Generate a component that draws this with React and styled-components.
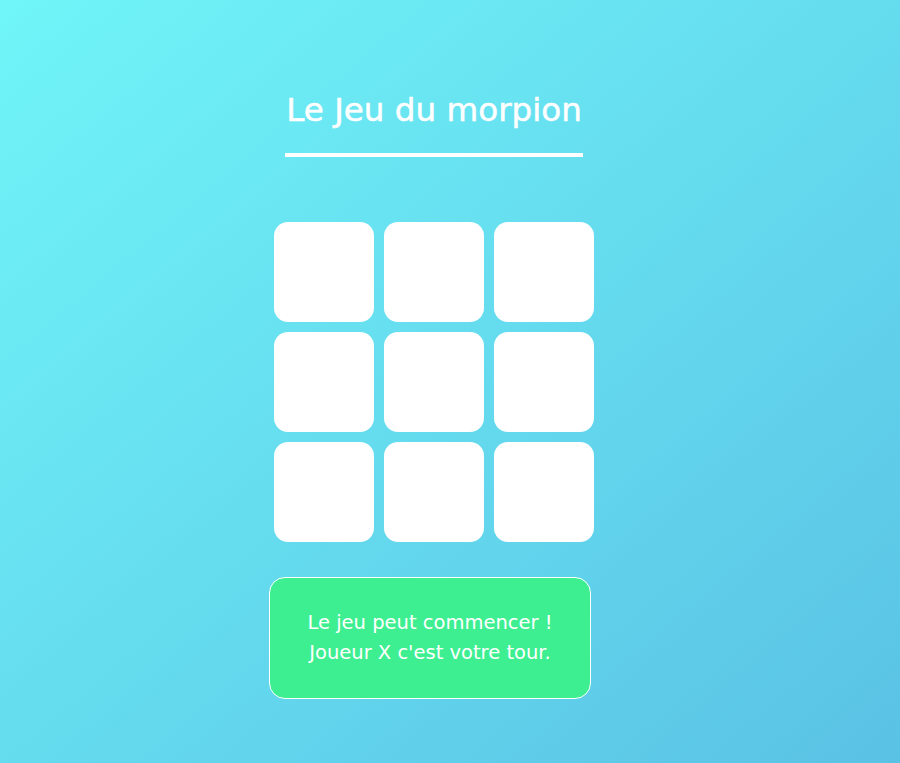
import React, { useState } from 'react';
import styled, { createGlobalStyle } from 'styled-components';

const GlobalStyle = createGlobalStyle`
  html, body {
    margin: 0;
    padding: 0;
  }
  body {
    min-height: 763px;
    font-family: 'DejaVu Sans', 'Open Sans', sans-serif;
    background: linear-gradient(to bottom right, #70f5f8, #5ac2e5);
  }
`;

const App = () => {
  const [cells] = useState(Array(9).fill(null));

  return (
    <>
      <GlobalStyle />
      <Page>
        <Board>
          <Title>Le Jeu du morpion</Title>
          <Underline />
          <Grid>
            {cells.map((value, i) => (
              <Cell key={i}>{value}</Cell>
            ))}
          </Grid>
          <Status>
            <StatusLine>Le jeu peut commencer !</StatusLine>
            <StatusLine>Joueur X c'est votre tour.</StatusLine>
          </Status>
        </Board>
      </Page>
    </>
  );
};

const Page = styled.div`
  min-height: 763px;
  padding-top: 88px;
  box-sizing: border-box;
`;

const Board = styled.div`
  width: 330px;
  margin-left: 269px;
  display: flex;
  flex-direction: column;
  align-items: center;
`;

const Title = styled.h1`
  margin: 0;
  font-size: 32.6px;
  font-weight: 400;
  line-height: 44px;
  color: #ffffff;
  -webkit-text-stroke: 0.5px #ffffff;
`;

const Underline = styled.div`
  width: 298px;
  height: 4px;
  background: #ffffff;
  margin-top: 21px;
`;

const Grid = styled.div`
  display: grid;
  grid-template-columns: repeat(3, 100px);
  grid-auto-rows: 100px;
  gap: 10px;
  margin-top: 65px;
`;

const Cell = styled.div`
  background: #ffffff;
  border-radius: 14px;
`;

const Status = styled.div`
  align-self: flex-start;
  width: 322px;
  height: 122px;
  box-sizing: border-box;
  margin-top: 35px;
  border: 1px solid #ffffff;
  border-radius: 16px;
  background: #3def91;
  display: flex;
  flex-direction: column;
  align-items: center;
  justify-content: center;
  color: #ffffff;
`;

const StatusLine = styled.p`
  margin: 0;
  font-size: 19.5px;
  line-height: 30px;
`;

export default App;
